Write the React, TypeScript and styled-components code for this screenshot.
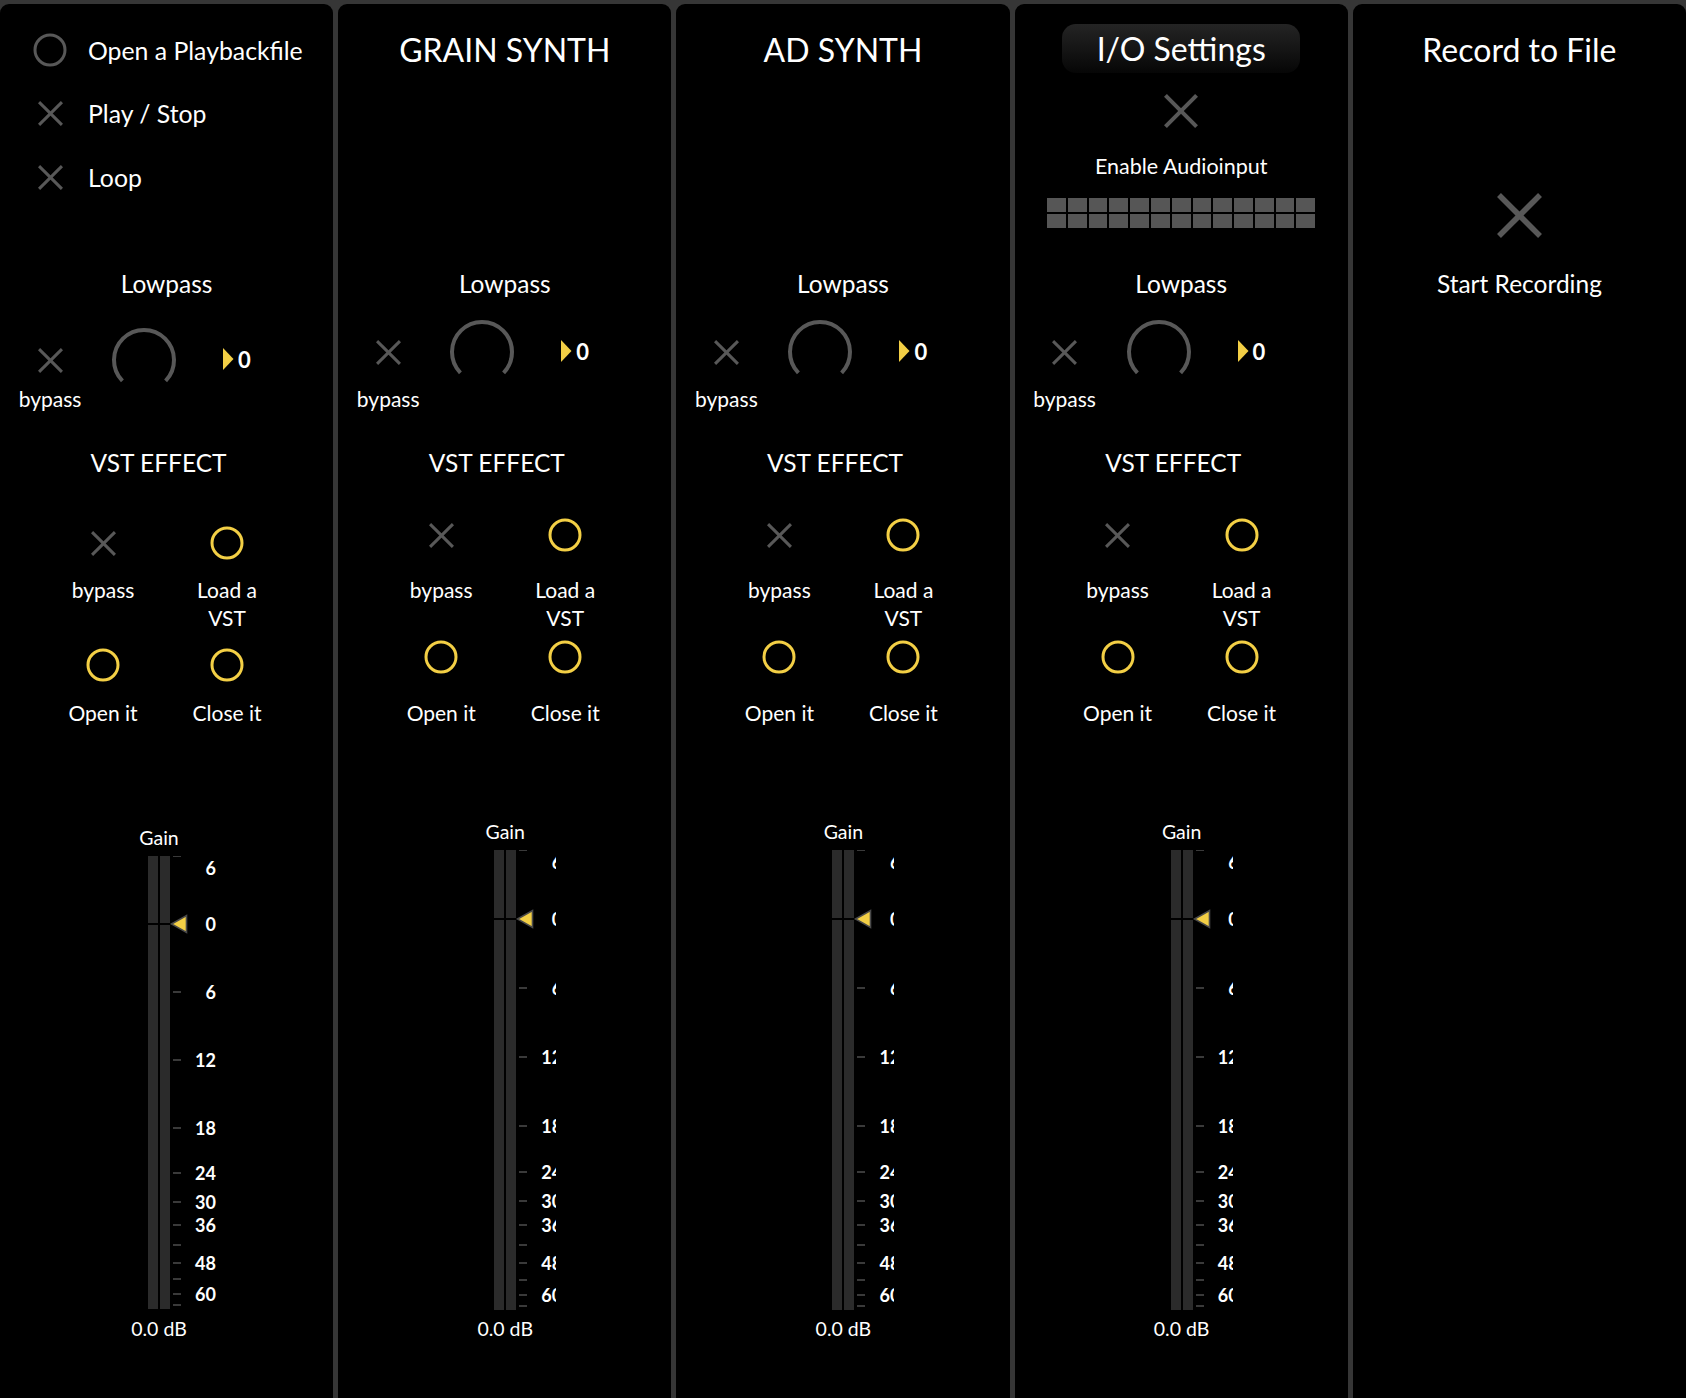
import React from 'react';
import styled, { createGlobalStyle } from 'styled-components';

const YELLOW = '#f3cf45';
const GRAY = '#585858';

const GlobalStyle = createGlobalStyle`
  html, body { margin: 0; padding: 0; background: #363636; }
  body { font-family: Lato, "Liberation Sans", sans-serif; color: #fff; -webkit-font-smoothing: antialiased; }
`;

const Page = styled.div`
  display: grid;
  grid-template-columns: repeat(5, 1fr);
  column-gap: 5px;
  padding-top: 4px;
  height: 1398px;
  box-sizing: border-box;
  overflow: hidden;
`;

const Panel = styled.section`
  background: #000;
  border-radius: 9px 9px 0 0;
  display: flex;
  flex-direction: column;
  min-width: 0;
`;

const TopArea = styled.div<{ $start?: boolean }>`
  height: 266px;
  display: flex;
  flex-direction: column;
  align-items: ${(p) => (p.$start ? 'flex-start' : 'center')};
  flex-shrink: 0;
`;

const Title = styled.h1`
  margin: 26px 0 0;
  font-size: 32px;
  font-weight: 400;
  line-height: 40px;
  white-space: nowrap;
`;

const Pill = styled.div`
  margin-top: 20px;
  width: 238px;
  height: 49px;
  border-radius: 14px;
  background: linear-gradient(to bottom, #242424 0%, #141414 55%, #060606 100%);
  display: flex;
  align-items: center;
  justify-content: center;
  font-size: 32px;
  line-height: 40px;
  white-space: nowrap;
`;

const TransportList = styled.div`
  display: flex;
  flex-direction: column;
  gap: 23.5px;
  padding: 26px 0 0 30px;
`;

const TransportRow = styled.div`
  display: flex;
  align-items: center;
  height: 40px;
  gap: 18px;
  font-size: 24.8px;
  white-space: nowrap;
`;

const IconBox = styled.div<{ $size?: number; $drop?: number }>`
  width: ${(p) => p.$size ?? 40}px;
  height: ${(p) => p.$size ?? 40}px;
  margin-top: ${(p) => p.$drop ?? 0}px;
  display: flex;
  align-items: center;
  justify-content: center;
  flex-shrink: 0;
`;

const SectionLabel = styled.div<{ $mt?: number; $shift?: number }>`
  margin-top: ${(p) => p.$mt ?? 0}px;
  margin-left: ${(p) => p.$shift ?? 0}px;
  font-size: 24.5px;
  line-height: 28px;
  text-align: center;
  white-space: nowrap;
`;

const SmallLabel = styled.div<{ $mt?: number }>`
  margin-top: ${(p) => p.$mt ?? 0}px;
  font-size: 21px;
  line-height: 28px;
  text-align: center;
  white-space: nowrap;
`;

const EnableLabel = styled.div`
  margin-top: 22px;
  font-size: 21.5px;
  line-height: 26px;
  white-space: nowrap;
`;

const SquareGrid = styled.div`
  margin-top: 19px;
  width: 268px;
  display: grid;
  grid-template-columns: repeat(13, 1fr);
  grid-auto-rows: 14px;
  gap: 2px;
`;

const Square = styled.div`
  background: #565656;
`;

const KnobRow = styled.div`
  display: grid;
  grid-template-columns: 100px 88px auto;
  justify-content: start;
  align-items: start;
  margin-top: 22px;
`;

const Cell = styled.div<{ $pt?: number }>`
  display: flex;
  flex-direction: column;
  align-items: center;
  padding-top: ${(p) => p.$pt ?? 0}px;
`;

const ValueBox = styled.div<{ $mt: number }>`
  margin-top: ${(p) => p.$mt}px;
  margin-left: 35px;
  display: flex;
  align-items: center;
  gap: 4px;
  height: 22px;
  font-size: 22px;
  font-weight: 700;
`;

const VstGrid = styled.div`
  display: grid;
  grid-template-columns: 124px 124px;
  row-gap: 5px;
  margin: 38px 0 0 41px;
  align-items: start;
`;

const GainSection = styled.div<{ $left: number; $mt: number }>`
  display: flex;
  flex-direction: column;
  align-items: flex-start;
  padding-left: ${(p) => p.$left}px;
  margin-top: ${(p) => p.$mt}px;
`;

const CenterSlot = styled.div<{ $mt?: number }>`
  width: 22px;
  display: flex;
  justify-content: center;
  white-space: nowrap;
  font-size: 19.5px;
  line-height: 22px;
  margin-top: ${(p) => p.$mt ?? 0}px;
`;

const MeterRow = styled.div<{ $h: number }>`
  display: flex;
  height: ${(p) => p.$h}px;
  margin-top: 7px;
`;

const Bars = styled.div`
  display: flex;
  gap: 2px;
`;

const Bar = styled.div`
  width: 10px;
  background: linear-gradient(
    to bottom,
    #2b2b2b calc(15% - 1px),
    #000 calc(15% - 1px),
    #000 calc(15% + 1px),
    #2b2b2b calc(15% + 1px)
  );
`;

const Scale = styled.div<{ $w: number }>`
  position: relative;
  width: ${(p) => p.$w}px;
  overflow: hidden;
`;

const Tick = styled.div`
  position: absolute;
  left: 3px;
  width: 8px;
  height: 2px;
  margin-top: -1px;
  background: #3a3a3a;
`;

const ScaleNum = styled.div`
  position: absolute;
  left: 6px;
  width: 40px;
  text-align: right;
  font-size: 18px;
  font-weight: 700;
  line-height: 20px;
  margin-top: -10px;
`;

const Pointer = styled.div`
  position: absolute;
  left: 0;
  width: 18px;
  height: 20px;
  margin-top: -10px;
`;

const XIcon = ({ size = 25, stroke = 3, color = GRAY }: { size?: number; stroke?: number; color?: string }) => {
  const o = stroke * 0.36;
  return (
    <svg width={size} height={size} viewBox={`0 0 ${size} ${size}`}>
      <g stroke={color} strokeWidth={stroke} strokeLinecap="butt">
        <line x1={o} y1={o} x2={size - o} y2={size - o} />
        <line x1={size - o} y1={o} x2={o} y2={size - o} />
      </g>
    </svg>
  );
};

const Ring = ({ color = YELLOW }: { color?: string }) => (
  <svg width={34} height={34} viewBox="0 0 34 34">
    <circle cx={17} cy={17} r={15} fill="none" stroke={color} strokeWidth={3} />
  </svg>
);

const Knob = () => {
  const c = 34;
  const r = 30;
  const a = (46 * Math.PI) / 180;
  const x1 = c - r * Math.sin(a);
  const x2 = c + r * Math.sin(a);
  const y = c + r * Math.cos(a);
  return (
    <svg width={68} height={68} viewBox="0 0 68 68" style={{ marginTop: -2 }}>
      <path d={`M ${x1} ${y} A ${r} ${r} 0 1 1 ${x2} ${y}`} fill="none" stroke={GRAY} strokeWidth={4} />
    </svg>
  );
};

const PlayTri = () => (
  <svg width={11} height={22} viewBox="0 0 11 22">
    <polygon points="0,0 10.5,11 0,22" fill={YELLOW} />
  </svg>
);

const MeterTri = () => (
  <svg width={18} height={20} viewBox="0 0 18 20">
    <polygon points="1.5,10 16.5,1.5 16.5,18.5" fill={YELLOW} stroke="#4a4a4a" strokeWidth={1.6} strokeLinejoin="miter" />
  </svg>
);

const ticks = [0, 0.3, 0.45, 0.6, 0.7, 0.764, 0.815, 0.859, 0.898, 0.934, 0.967, 0.991];
const labels: { t: string; f: number; off?: number }[] = [
  { t: '6', f: 0, off: 12 },
  { t: '0', f: 0.15 },
  { t: '6', f: 0.3 },
  { t: '12', f: 0.45 },
  { t: '18', f: 0.6 },
  { t: '24', f: 0.7 },
  { t: '30', f: 0.764 },
  { t: '36', f: 0.815 },
  { t: '48', f: 0.898 },
  { t: '60', f: 0.967 },
];

const Meter = ({ h, w }: { h: number; w: number }) => (
  <MeterRow $h={h}>
    <Bars>
      <Bar />
      <Bar />
    </Bars>
    <Scale $w={w}>
      {ticks.map((f, i) => (
        <Tick key={i} style={{ top: `${f * h}px` }} />
      ))}
      <Pointer style={{ top: `${0.15 * h}px` }}>
        <MeterTri />
      </Pointer>
      {labels.map((l, i) => (
        <ScaleNum key={i} style={{ top: `${l.f * h + (l.off ?? 0)}px` }}>
          {l.t}
        </ScaleNum>
      ))}
    </Scale>
  </MeterRow>
);

const ChannelStrip = ({ drop = 0, first = false }: { drop?: number; first?: boolean }) => (
  <>
    <SectionLabel>Lowpass</SectionLabel>
    <KnobRow>
      <Cell $pt={12}>
        <IconBox $drop={drop}>
          <XIcon />
        </IconBox>
        <SmallLabel $mt={13 - drop}>bypass</SmallLabel>
      </Cell>
      <Cell $pt={drop}>
        <Knob />
      </Cell>
      <ValueBox $mt={20 + drop}>
        <PlayTri />
        <span>0</span>
      </ValueBox>
    </KnobRow>
    <SectionLabel $mt={36} $shift={-16}>VST EFFECT</SectionLabel>
    <VstGrid>
      <Cell>
        <IconBox $drop={drop}>
          <XIcon />
        </IconBox>
        <SmallLabel $mt={21 - drop}>bypass</SmallLabel>
      </Cell>
      <Cell>
        <IconBox $drop={drop}>
          <Ring />
        </IconBox>
        <SmallLabel $mt={21 - drop}>
          Load a<br />VST
        </SmallLabel>
      </Cell>
      <Cell>
        <IconBox $drop={drop}>
          <Ring />
        </IconBox>
        <SmallLabel $mt={22 - drop}>Open it</SmallLabel>
      </Cell>
      <Cell>
        <IconBox $drop={drop}>
          <Ring />
        </IconBox>
        <SmallLabel $mt={22 - drop}>Close it</SmallLabel>
      </Cell>
    </VstGrid>
    <GainSection $left={first ? 148 : 156} $mt={first ? 100 : 94}>
      <CenterSlot>Gain</CenterSlot>
      <Meter h={first ? 453 : 460} w={first ? 60 : 40} />
      <CenterSlot $mt={first ? 9 : 8}>0.0 dB</CenterSlot>
    </GainSection>
  </>
);

export default function App() {
  return (
    <>
      <GlobalStyle />
      <Page>
        <Panel>
          <TopArea $start>
            <TransportList>
              <TransportRow>
                <IconBox>
                  <Ring color={GRAY} />
                </IconBox>
                Open a Playbackfile
              </TransportRow>
              <TransportRow>
                <IconBox>
                  <XIcon />
                </IconBox>
                Play / Stop
              </TransportRow>
              <TransportRow>
                <IconBox>
                  <XIcon />
                </IconBox>
                Loop
              </TransportRow>
            </TransportList>
          </TopArea>
          <ChannelStrip drop={8} first />
        </Panel>
        <Panel>
          <TopArea>
            <Title>GRAIN SYNTH</Title>
          </TopArea>
          <ChannelStrip />
        </Panel>
        <Panel>
          <TopArea>
            <Title>AD SYNTH</Title>
          </TopArea>
          <ChannelStrip />
        </Panel>
        <Panel>
          <TopArea>
            <Pill>I/O Settings</Pill>
            <IconBox $size={40} style={{ marginTop: 18 }}>
              <XIcon size={34} stroke={4} />
            </IconBox>
            <EnableLabel>Enable Audioinput</EnableLabel>
            <SquareGrid>
              {Array.from({ length: 26 }).map((_, i) => (
                <Square key={i} />
              ))}
            </SquareGrid>
          </TopArea>
          <ChannelStrip />
        </Panel>
        <Panel>
          <TopArea>
            <Title>Record to File</Title>
            <IconBox $size={50} style={{ marginTop: 120 }}>
              <XIcon size={45} stroke={5.5} />
            </IconBox>
            <SectionLabel $mt={30}>Start Recording</SectionLabel>
          </TopArea>
        </Panel>
      </Page>
    </>
  );
}
